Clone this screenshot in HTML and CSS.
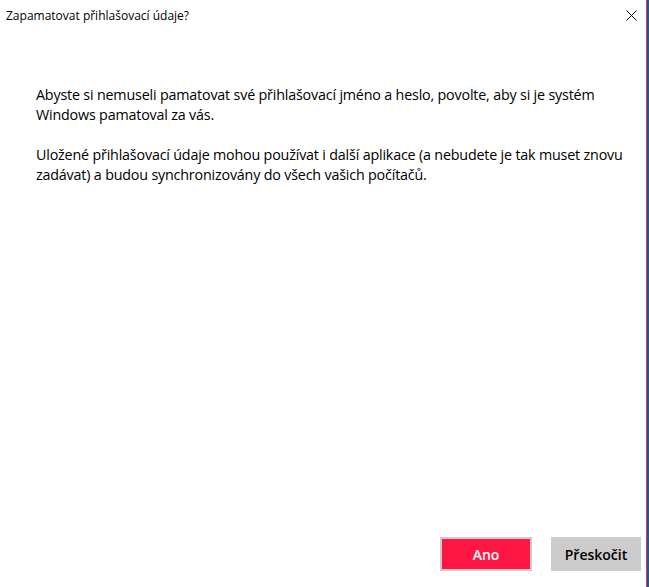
FILE: index.html
```html
<!DOCTYPE html>
<html lang="cs">
<head>
<meta charset="utf-8">
<title>Zapamatovat přihlašovací údaje?</title>
<link rel="stylesheet" href="styles.css">
</head>
<body>
<div class="window">
  <div class="main">
    <div class="titlebar">
      <span class="title">Zapamatovat přihlašovací údaje?</span>
      <span class="close" aria-label="Zavřít">
        <svg width="11" height="11" viewBox="0 0 11 11"><path d="M0.5 0.5 L10.5 10.5 M10.5 0.5 L0.5 10.5" stroke="#000" stroke-width="1" fill="none"/></svg>
      </span>
    </div>
    <div class="content">
      <p>Abyste si nemuseli pamatovat své přihlašovací jméno a heslo, povolte, aby si je systém Windows pamatoval za vás.</p>
      <p>Uložené přihlašovací údaje mohou používat i další aplikace (a nebudete je tak muset znovu zadávat) a budou synchronizovány do všech vašich počítačů.</p>
    </div>
    <div class="actions">
      <button class="btn btn-primary">Ano</button>
      <button class="btn btn-secondary">Přeskočit</button>
    </div>
  </div>
  <div class="edge"></div>
</div>
</body>
</html>
```
FILE: styles.css
```css
html, body {
  margin: 0;
  padding: 0;
  background: #fff;
}
body {
  font-family: "Open Sans", "Noto Sans", "Liberation Sans", sans-serif;
  color: #000;
}
.window {
  display: flex;
  width: 649px;
  height: 587px;
}
.main {
  flex: 1;
  display: flex;
  flex-direction: column;
}
.edge {
  width: 3px;
  border-left: 1px solid #e8304f;
  background: #1b5a8f;
  box-sizing: border-box;
}
.titlebar {
  height: 30px;
  display: flex;
  align-items: center;
  justify-content: space-between;
  padding-left: 6px;
  padding-right: 9px;
}
.title {
  font-size: 12px;
}
.close {
  display: flex;
  width: 11px;
  height: 11px;
}
.content {
  padding: 55px 20px 0 36px;
  flex: 1;
  font-size: 14.3px;
  line-height: 20px;
  letter-spacing: -0.18px;
}
.content p {
  margin: 0 0 20px;
}
.actions {
  display: flex;
  justify-content: flex-end;
  gap: 19px;
  padding: 0 5px 16px 0;
}
.btn {
  width: 92px;
  height: 34px;
  font-family: inherit;
  font-size: 14px;
  font-weight: 600;
  border: 2px solid #cccccc;
  padding: 0;
  box-sizing: border-box;
}
.btn-primary {
  background: #ff1744;
  color: #fff;
}
.btn-secondary {
  width: 90px;
  background: #cccccc;
  color: #000;
}
```
